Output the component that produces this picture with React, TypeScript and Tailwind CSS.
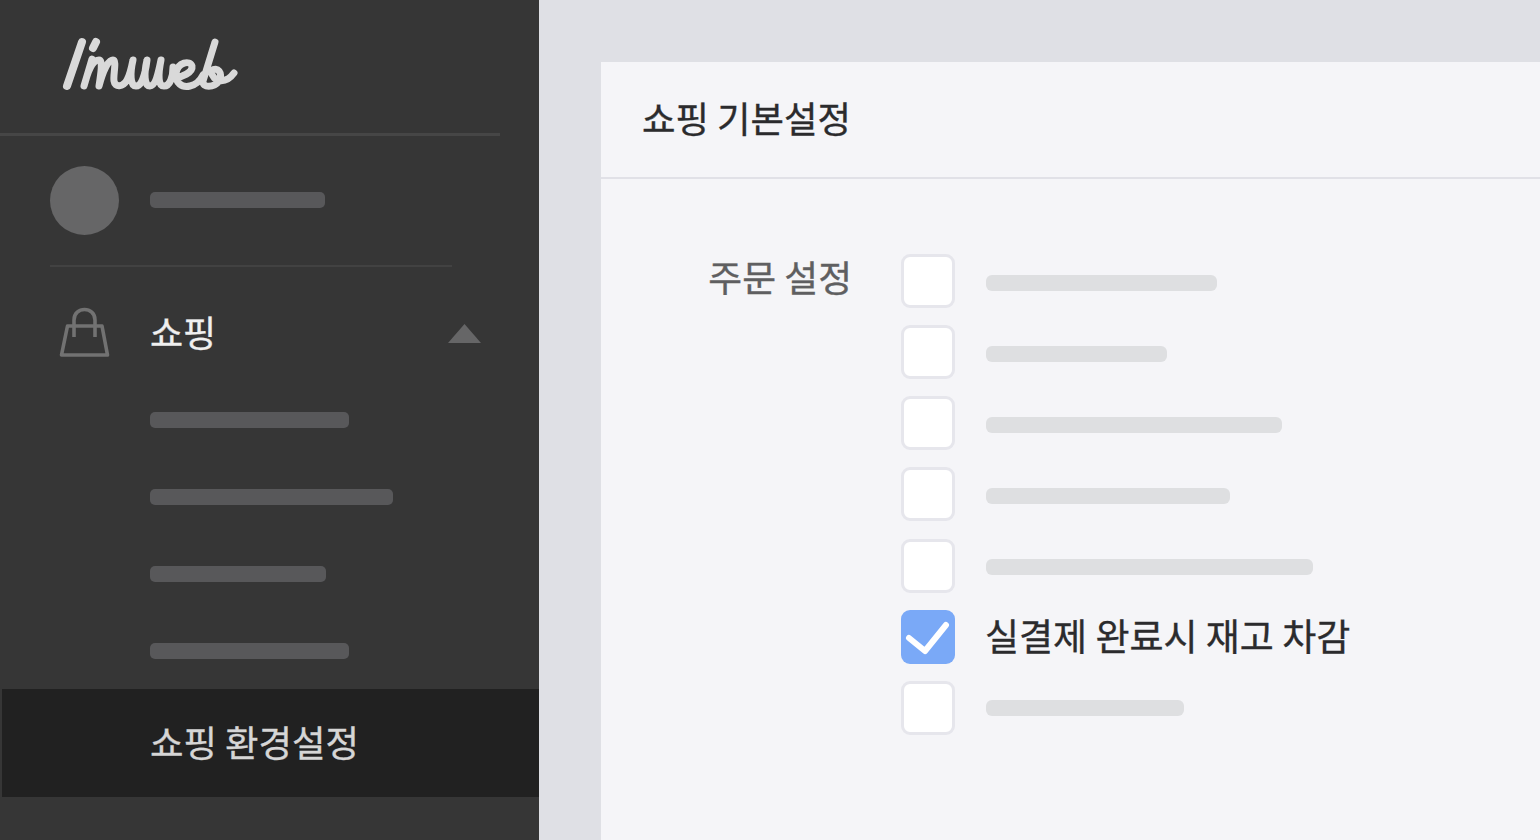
const FONT = "font-['Noto_Sans_CJK_KR','Noto_Sans',sans-serif]";
const SEMI = "[-webkit-text-stroke:0.35px]";

function Logo() {
  return (
    <svg width="180" height="60" viewBox="0 0 180 60" fill="none" stroke="#d9d9d9" strokeWidth="7" strokeLinecap="round" strokeLinejoin="round">
      <path d="M22 7 L7 51" strokeWidth="8" />
      <path d="M36 7 L33 13" strokeWidth="8" />
      <path d="M32 24 L24 51 C28 36 33 25 39 25 C43 25 41 38 39 51 C43 36 48 25 53 25 C57 25 53 40 54 46 C55 53 63 52 67 45 C70 40 72 30 73 25 C70 38 70 51 76 51 C81 51 85 42 87 25 C84 38 84 51 90 51 C95 51 98 40 101 25 C98 40 98 51 104 51 C110 51 113 42 113 32" />
      <path d="M114 42 C122 43 133 37 132 31 C130 25 118 27 116 38 C115 48 122 53 130 51 C135 50 140 46 143 40" />
      <path d="M155 7 L143 46 C142 53 154 53 159 46 C163 38 158 31 151 36 C153 48 166 49 174 38" />
    </svg>
  );
}

function Bag() {
  return (
    <svg width="52" height="52" viewBox="0 0 52 52" fill="none" stroke="#727272" strokeWidth="3.6">
      <path d="M8.5 19 H43 L48.5 48 H2.5 Z" strokeLinejoin="round" />
      <path d="M15 30 V13 C15 -1 36 -1 36 13 V30" />
    </svg>
  );
}

function SideBar({ w }: { w: string }) {
  return <div className={`h-4 rounded-[5px] bg-[#58585a] ${w}`} />;
}

function Sidebar() {
  return (
    <aside className={`w-[539px] shrink-0 h-full bg-[#363636] flex flex-col ${FONT}`}>
      <div className="h-[133px] shrink-0 pl-[60px] pt-[35px]">
        <Logo />
      </div>
      <div className="w-[500px] h-[3px] shrink-0 bg-[#464646]" />
      <div className="h-[129px] shrink-0 pl-[50px] flex items-center">
        <div className="w-[69px] h-[69px] rounded-full bg-[#666667]" />
        <div className="ml-[31px] -mt-[2px]"><SideBar w="w-[175px]" /></div>
      </div>
      <div className="ml-[50px] w-[402px] h-[2px] shrink-0 bg-[#424242]" />
      <div className="h-[146px] shrink-0 flex pt-[40px] items-start pl-[59px] pr-[58px]">
        <Bag />
        <span className={`ml-[39px] text-[36px] leading-[50px] -mt-[1px] text-[#f0f0f0] ${SEMI}`}>쇼핑</span>
        <svg className="ml-auto mt-[17px]" width="33" height="20" viewBox="0 0 33 20">
          <path d="M16.5 0 L33 19 H0 Z" fill="#666667" />
        </svg>
      </div>
      <div className="shrink-0 pl-[150px] -mt-[1px] flex flex-col gap-[61px]">
        <SideBar w="w-[199px]" />
        <SideBar w="w-[243px]" />
        <SideBar w="w-[176px]" />
        <SideBar w="w-[199px]" />
      </div>
      <div className={`ml-[2px] mt-[30px] h-[108px] shrink-0 bg-[#212121] flex items-center pl-[148px] pb-[4px] text-[36.4px] text-[#d6d6d6] ${SEMI}`}>
        쇼핑 환경설정
      </div>
    </aside>
  );
}

function Box({ checked }: { checked?: boolean }) {
  if (checked) {
    return (
      <div className="w-[54px] h-[54px] rounded-[9px] bg-[#7aa9f7] flex items-center justify-center">
        <svg width="54" height="54" viewBox="0 0 54 54" fill="none" stroke="#ffffff" strokeWidth="6" strokeLinecap="round" strokeLinejoin="round">
          <path d="M8 28 L24 41 L45 15" />
        </svg>
      </div>
    );
  }
  return <div className="w-[54px] h-[54px] rounded-[9px] bg-white border-[3px] border-[#e6e6ec]" />;
}

function Row({ w, text, last }: { w?: string; text?: string; last?: boolean }) {
  return (
    <div className="flex items-center h-[71.17px]">
      <Box checked={!!text} />
      {text ? (
        <span className={`ml-[30px] text-[37px] leading-[54px] -mt-[3px] text-[#2b2b2d] ${SEMI}`}>{text}</span>
      ) : (
        <div className={`ml-[31px] ${last ? "mt-[1px]" : "mt-[3.4px]"} h-4 rounded-[6px] bg-[#dedfe1] ${w}`} />
      )}
    </div>
  );
}

export default function App() {
  return (
    <div className={`w-[1540px] h-[840px] overflow-hidden flex bg-[#dfe0e5] ${FONT}`}>
      <Sidebar />
      <main className="flex-1 pl-[62px] pt-[62px] h-full">
        <div className="h-full bg-[#f5f5f8]">
          <div className="h-[117px] border-b-2 border-[#e1e1e7] pl-[41px] flex items-center">
            <h1 className={`text-[36.4px] font-normal leading-none -mt-[5px] text-[#2b2b2d] ${SEMI}`}>쇼핑 기본설정</h1>
          </div>
          <div className="flex pt-[66.4px]">
            <div className={`w-[251px] text-right text-[36.8px] leading-[54px] mt-[4px] text-[#5f5f61] shrink-0 ${SEMI}`}>주문 설정</div>
            <div className="ml-[49px] flex flex-col">
              <Row w="w-[231px]" />
              <Row w="w-[181px]" />
              <Row w="w-[296px]" />
              <Row w="w-[244px]" />
              <Row w="w-[327px]" />
              <Row text="실결제 완료시 재고 차감" />
              <Row w="w-[198px]" last />
            </div>
          </div>
        </div>
      </main>
    </div>
  );
}
